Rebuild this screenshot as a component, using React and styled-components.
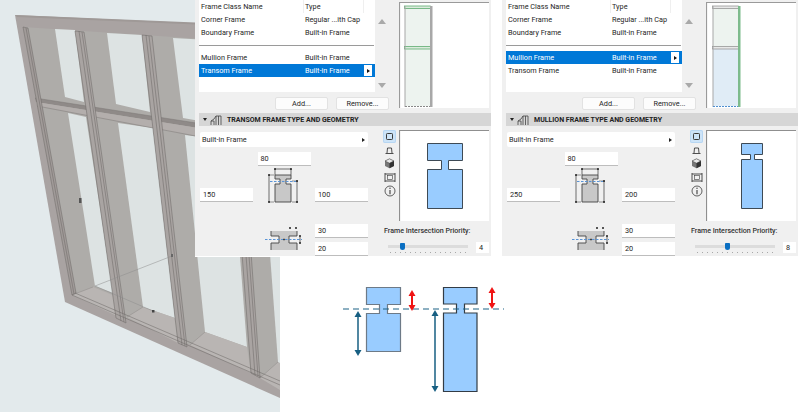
import React from "react";
import styled, { createGlobalStyle } from "styled-components";

const GlobalStyle = createGlobalStyle`
  html, body {
    margin: 0;
    padding: 0;
    background: #fff;
  }
  body {
    font-family: Roboto, "Liberation Sans", sans-serif;
    color: #262626;
  }
`;

const Page = styled.div`
  position: relative;
  width: 799px;
  height: 412px;
  overflow: hidden;
  background: #fff;
`;

const ArtLayer = styled.svg`
  position: absolute;
  left: 0;
  top: 0;
`;

const Panels = styled.div`
  position: relative;
  display: flex;
  gap: 11px;
  padding-left: 195px;
`;

const Panel = styled.section`
  width: 296px;
  flex: none;
  height: 257px;
  padding-left: 4px;
  box-sizing: border-box;
  background: #f0f0f0;
  border-bottom: 1px solid #fff;
`;

const TopArea = styled.div`
  display: flex;
  height: 110px;
`;

const ListBlock = styled.div`
  width: 190px;
  flex: none;
`;

const ListRow = styled.div`
  display: flex;
  height: 92px;
`;

const List = styled.div`
  width: 176px;
  height: 92px;
  background: #fff;
  flex: none;
`;

const Row = styled.div`
  display: grid;
  grid-template-columns: 105px 60px 11px;
  height: 13px;
  line-height: 13px;
  font-size: 7.3px;
  background: ${(p) => (p.$selected ? "#0078d7" : "transparent")};
  color: ${(p) => (p.$selected ? "#fff" : "#262626")};
`;

const Cell = styled.span`
  padding-left: ${(p) => (p.$first ? "2px" : "1px")};
  white-space: nowrap;
  border-right: ${(p) => (p.$head ? "1px solid #efefef" : "none")};
  box-sizing: border-box;
`;

const RowButton = styled.span`
  display: flex;
  align-items: center;
  justify-content: center;
  width: 8px;
  height: 11px;
  margin-top: 1px;
  background: #fff;
  &::before {
    content: "";
    border-left: 3px solid #111;
    border-top: 2px solid transparent;
    border-bottom: 2px solid transparent;
  }
`;

const Divider = styled.div`
  height: 12px;
  display: flex;
  align-items: center;
  &::before {
    content: "";
    width: 175px;
    height: 1px;
    background: #9a9a9a;
  }
`;

const Scroll = styled.div`
  flex: 1;
  display: flex;
  flex-direction: column;
  justify-content: space-between;
  align-items: center;
  padding: 19px 0 4px;
  box-sizing: border-box;
`;

const Arrow = styled.span`
  width: 0;
  height: 0;
  border-left: 4px solid transparent;
  border-right: 4px solid transparent;
  ${(p) =>
    p.$down
      ? "border-top: 5px solid #a9a9a9;"
      : "border-bottom: 5px solid #a9a9a9;"}
`;

const Buttons = styled.div`
  display: flex;
  justify-content: flex-end;
  gap: 8px;
  margin-top: 5px;
`;

const Button = styled.div`
  width: 53px;
  height: 13px;
  line-height: 12px;
  text-align: center;
  font-size: 7.3px;
  background: #fcfcfc;
  border: 1px solid #e2e2e2;
  border-radius: 2px;
  box-sizing: border-box;
`;

const ElevationBox = styled.svg`
  display: block;
  margin: 2px 0 0 10px;
  flex: none;
`;

const SectionHead = styled.header`
  display: flex;
  align-items: center;
  height: 13px;
  margin-top: 3px;
  padding-left: 4px;
  background: #d6d6d6;
  font-size: 7px;
  font-weight: 700;
  color: #222;
  white-space: nowrap;
`;

const Caret = styled.span`
  width: 0;
  height: 0;
  border-left: 2.5px solid transparent;
  border-right: 2.5px solid transparent;
  border-top: 3px solid #222;
  margin-right: 3px;
`;

const HeadIcon = styled.svg`
  margin-right: 5px;
`;

const GeoArea = styled.div`
  display: flex;
  margin-top: 4px;
`;

const Fields = styled.div`
  width: 168px;
  margin: 2px 15px 0 1px;
  flex: none;
`;

const Dropdown = styled.div`
  display: flex;
  align-items: center;
  justify-content: space-between;
  height: 15px;
  padding: 0 3px 0 2px;
  font-size: 7.3px;
  background: #fff;
  border-radius: 2px;
  box-sizing: border-box;
  &::after {
    content: "";
    border-left: 3px solid #222;
    border-top: 2px solid transparent;
    border-bottom: 2px solid transparent;
  }
`;

const SizeGrid = styled.div`
  display: grid;
  grid-template-columns: 53px 53px 53px;
  grid-template-rows: 14px 36px 36px 18px;
  column-gap: 4.5px;
  margin-top: 5px;
`;

const Field = styled.div`
  grid-column: ${(p) => p.$col};
  grid-row: ${(p) => p.$row};
  align-self: end;
  height: 14px;
  line-height: 13px;
  padding-left: 3px;
  font-size: 7.3px;
  background: #fff;
  border-bottom: 1px solid #bdbdbd;
  box-sizing: border-box;
`;

const DimIcon = styled.svg`
  grid-column: 2;
  grid-row: ${(p) => p.$row};
  justify-self: center;
  align-self: ${(p) => p.$align};
  margin-bottom: ${(p) => p.$lift || 0}px;
`;

const RightColumn = styled.div`
  width: 107px;
  flex: none;
`;

const ViewRow = styled.div`
  display: flex;
  height: 91px;
`;

const ViewIcons = styled.div`
  width: 16px;
  flex: none;
  display: flex;
  flex-direction: column;
  align-items: flex-start;
`;

const ViewIcon = styled.div`
  width: 13px;
  height: 13px;
  margin-bottom: 0.6px;
  display: flex;
  align-items: center;
  justify-content: center;
  border-radius: 2px;
  background: ${(p) => (p.$active ? "#cde4f8" : "transparent")};
  box-shadow: ${(p) => (p.$active ? "inset 0 0 0 1px #b7d6f2" : "none")};
`;

const SectionView = styled.svg`
  display: block;
  flex: none;
`;

const PriorityLabel = styled.div`
  margin: 4px 0 0 1px;
  font-size: 7.1px;
  font-weight: 500;
  line-height: 12px;
  white-space: nowrap;
  color: #333;
`;

const SliderRow = styled.div`
  display: flex;
  align-items: flex-start;
  margin-top: 5px;
`;

const Slider = styled.div`
  position: relative;
  width: 80px;
  height: 12px;
  margin: 0 8px 0 5px;
  flex: none;
`;

const Track = styled.div`
  position: absolute;
  left: 0;
  right: 0;
  top: 3px;
  height: 3px;
  background: #dcdcdc;
`;

const Thumb = styled.div`
  position: absolute;
  top: 1px;
  width: 5px;
  height: 7px;
  margin-left: -2px;
  background: #0a6fc2;
  border-radius: 1px 1px 3px 3px;
`;

const Ticks = styled.div`
  position: absolute;
  left: 2px;
  right: 0;
  top: 10px;
  height: 1px;
  background: repeating-linear-gradient(
    to right,
    #a8a8a8 0 1px,
    transparent 1px 5px
  );
`;

const Value = styled.div`
  width: 13px;
  height: 11px;
  line-height: 11px;
  padding-left: 3px;
  font-size: 7.3px;
  background: #fff;
  box-sizing: border-box;
`;

const Diagram = styled.svg`
  display: block;
  margin: 22px 0 0 338px;
`;

const poly = (fill, points, stroke, w) => (
  <polygon points={points} fill={fill} stroke={stroke || "none"} strokeWidth={w || 0} />
);

function WindowArt() {
  const reveal = "#aeaca9";
  const glass = "#dde3e3";
  const sill = "#b9b5b3";
  const frame = "#a9a3a2";
  const face = "#a9a4a2";
  const line = "#6a6665";
  const mullions = [
    "75,31 84,32 126,323 116,318",
    "142,35 152,36 187,347 178,343",
    "226,41 236,42 260,378 251,373",
  ];
  return (
    <ArtLayer width="280" height="412" viewBox="0 0 280 412">
      <rect width="280" height="412" fill="#e3eaec" />
      {poly(frame, "15,15 280,27 280,398 65,302")}
      {poly("#9f9997", "15,15 280,26 280,28 17,17")}
      {poly(reveal, "23,27 280,44 280,383 72,295")}
      {/* glass */}
      {poly(glass, "55,29 75,30 84,102 65,97")}
      {poly(glass, "107,33 142,35 150,112 116,104")}
      {poly(glass, "173,38 226,41 234,127 183,118")}
      {poly(glass, "262,44 280,46 280,130 268,128")}
      {poly(glass, "68,113 86,117 113,293 95,286")}
      {poly(glass, "118,123 153,128 175,318 143,307")}
      {poly(glass, "185,135 231,141 247,347 205,332")}
      {poly(glass, "262,146 280,150 280,365 278,362")}
      {/* sills */}
      {poly(sill, "72,295 93,287 115,296 117,316")}
      {poly(sill, "127,317 143,307 175,318 178,343")}
      {poly(sill, "190,345 205,332 247,347 251,373")}
      {poly(sill, "260,378 278,362 280,363 280,390")}
      <path d="M93,287 L72,295 M143,307 L127,317 M205,332 L190,345 M278,362 L260,378" stroke="#8f8b89" strokeWidth="0.5" />
      {/* transom */}
      {poly("#8f8a88", "35,98 280,136 280,141 36,102")}
      {poly("#b3aeac", "36,102 280,141 280,152 37,106")}
      <path d="M35,98 L280,136 M37,106 L280,152" stroke="#7d7876" strokeWidth="0.5" fill="none" />
      {/* mullions */}
      {mullions.map((points) => (
        <polygon key={points} points={points} fill={face} stroke={line} strokeWidth="0.5" />
      ))}
      <path
        d="M79,31 L121,321 M82,32 L124,322 M146,35 L182,345 M149,36 L185,346 M230,42 L255,375 M233,42 L258,376"
        stroke={line}
        strokeWidth="0.5"
        fill="none"
      />
      {/* frame inner strip */}
      {poly("#a19b99", "23,27 28,28 76,293 72,295", line, 0.5)}
      <path d="M26,28 L74,294 M72,295 L280,385 M75,293 L280,381" stroke={line} strokeWidth="0.5" fill="none" />
      <path d="M95,286 L172,256 M95,286 L153,311" stroke="#8c8c8c" strokeWidth="0.5" fill="none" />
      <rect x="79" y="198" width="2.5" height="5" fill="#555" />
      <rect x="152" y="310" width="2.5" height="2.5" fill="#444" />
      <rect x="171" y="254" width="2" height="3" fill="#666" />
    </ArtLayer>
  );
}

// small elevation thumbnail of the window at the top of each panel
function Elevation({ mode }) {
  const mullion = mode === "mullion";
  const x = mullion ? 7 : 6;
  const gray = "#a8a8a8";
  const green = "#7dbb8c";
  return (
    <ElevationBox width="90" height="106" viewBox="0 0 90 106">
      <rect width="90" height="106" fill="#fff" />
      <path d="M0.5,106 V0.5 H90" stroke="#9a9a9a" strokeWidth="1.2" fill="none" />
      <rect x={x} y="4" width="25" height="42" fill="#edf3ef" />
      <rect x={x} y="47" width="25" height="57" fill={mullion ? "#e0ecf6" : "#edf3ef"} />
      <rect x={x - 0.5} y="4" width="26" height="2.5" fill={mullion ? "#e8e8e8" : "#dcebdd"} stroke={mullion ? "#8b8b8b" : "#4aa35f"} strokeWidth="0.7" />
      <rect x={x - 0.5} y="44.5" width="26" height="2.5" fill={mullion ? "#e8e8e8" : "#dcebdd"} stroke={mullion ? "#8b8b8b" : "#4aa35f"} strokeWidth="0.7" />
      <rect x={x - 0.5} y="4" width="1" height="101" fill={gray} />
      <rect x={x + 25} y="4" width="2.5" height="101" fill={mullion ? green : gray} />
      <line
        x1={x}
        x2={x + 25}
        y1="104.5"
        y2="104.5"
        stroke={mullion ? "#4f8fd0" : "#888"}
        strokeWidth="1"
        strokeDasharray="2 1"
      />
    </ElevationBox>
  );
}

function HeadGlyph() {
  return (
    <HeadIcon width="12" height="12" viewBox="0 0 12 12" fill="none" stroke="#444" strokeWidth="0.8">
      <path d="M1,11 V7 H4 V11 M4,5 L6,2 H11 V11 M6,2 V11 M8.5,2 V11" />
      <path d="M1,7 L4,5" />
    </HeadIcon>
  );
}

function HeadDims() {
  return (
    <DimIcon $row="2" $align="start" width="36" height="38" viewBox="0 0 36 38" fill="none">
      <path d="M9,9 H25 V13 H20 V18 H25 V36 H9 V18 H14 V13 H9 Z" fill="#c8c8c8" stroke="#444" strokeWidth="0.9" />
      <path d="M9,3 H25 M9,3 V9 M25,3 V9" stroke="#333" strokeWidth="0.7" />
      <circle cx="9" cy="3" r="1" fill="#222" />
      <circle cx="25" cy="3" r="1" fill="#222" />
      <path d="M3,9 V36 M31,15 V36" stroke="#333" strokeWidth="0.7" />
      <path d="M3,9 H8 M3,36 H8 M26,15 H32 M26,36 H32" stroke="#333" strokeWidth="0.5" />
      <circle cx="3" cy="9" r="1" fill="#222" />
      <circle cx="3" cy="36" r="1" fill="#222" />
      <circle cx="31" cy="15" r="1" fill="#222" />
      <circle cx="31" cy="36" r="1" fill="#222" />
      <path d="M4,15.5 H30" stroke="#5a94d6" strokeWidth="1" strokeDasharray="2.5 1.5" />
    </DimIcon>
  );
}

function JointDims() {
  return (
    <DimIcon $row="3 / 5" $align="end" $lift={4} width="40" height="27" viewBox="0 0 40 27" fill="none">
      <path d="M7,6 H33 V11 H25 V18 H33 V25 H7 V18 H15 V11 H7 Z" fill="#c8c8c8" />
      <path d="M7,6 V11 H15 V18 H7 V25 M33,6 V11 H25 V18 H33 V25" stroke="#444" strokeWidth="0.9" />
      <path d="M1,14.5 H38" stroke="#5a94d6" strokeWidth="1" strokeDasharray="2.5 1.5" />
      <path d="M19,14.5 H21 M20,13.5 V15.5" stroke="#333" strokeWidth="0.8" />
      <circle cx="26" cy="3" r="1" fill="#222" />
      <circle cx="32" cy="3" r="1" fill="#222" />
      <circle cx="36" cy="11" r="1" fill="#222" />
      <circle cx="36" cy="18" r="1" fill="#222" />
      <path d="M36,11 V18" stroke="#333" strokeWidth="0.7" />
    </DimIcon>
  );
}

function ViewGlyph({ kind }) {
  const stroke = "#3b3b3b";
  if (kind === "square") {
    return (
      <svg width="9" height="9" viewBox="0 0 9 9" fill="none">
        <rect x="1.5" y="1.5" width="6" height="6" rx="0.8" stroke={stroke} />
      </svg>
    );
  }
  if (kind === "plan") {
    return (
      <svg width="11" height="11" viewBox="0 0 11 11" fill="none" stroke={stroke} strokeWidth="0.9">
        <path d="M3,8 L3.5,3 H7.5 L8,8 M1.5,8.5 H9.5" />
      </svg>
    );
  }
  if (kind === "cube") {
    return (
      <svg width="11" height="11" viewBox="0 0 11 11">
        <path d="M5.5,0.8 L10,3 V8 L5.5,10.2 L1,8 V3 Z" fill="#777" />
        <path d="M5.5,0.8 L10,3 L5.5,5.2 L1,3 Z" fill="#e9e9e9" stroke="#333" strokeWidth="0.5" />
        <path d="M5.5,5.2 V10.2 L10,8 V3 Z" fill="#333" />
      </svg>
    );
  }
  if (kind === "frame") {
    return (
      <svg width="12" height="11" viewBox="0 0 12 11" fill="none" stroke={stroke} strokeWidth="0.9">
        <path d="M1,1 V10 M11,1 V10 M1,2 H11 M1,9 H11" />
        <rect x="3.5" y="3.5" width="5" height="4" strokeWidth="0.6" />
      </svg>
    );
  }
  return (
    <svg width="12" height="12" viewBox="0 0 12 12" fill="none" stroke={stroke} strokeWidth="0.8">
      <circle cx="6" cy="6" r="5" />
      <path d="M6,5 V9.2" strokeWidth="1.1" />
      <circle cx="6" cy="3.2" r="0.7" fill={stroke} stroke="none" />
    </svg>
  );
}

// profile outline: x0-x1 outer, nl/nr notch edges, nt/nb notch heights
const profile = (x0, x1, nl, nr, top, nt, nb, bottom) =>
  `M${x0},${top} H${x1} V${nt} H${nr} V${nb} H${x1} V${bottom} H${x0} V${nb} H${nl} V${nt} H${x0} Z`;

function SectionPreview({ mode }) {
  const d =
    mode === "mullion"
      ? profile(35.5, 56.5, 44.5, 48.5, 13.5, 24.5, 29.5, 78.5)
      : profile(28.5, 63.5, 42.5, 49.5, 13.5, 30.5, 39.5, 78.5);
  return (
    <SectionView width="90" height="91" viewBox="0 0 90 91">
      <rect width="90" height="91" fill="#fff" />
      <path d="M0.5,91 V0.5 H90" stroke="#8f8f8f" strokeWidth="1.2" fill="none" />
      <path d={d} fill="#99ccff" stroke="#3e4a55" strokeWidth="1" />
    </SectionView>
  );
}

function Arrowed({ x, y1, y2, color, width }) {
  return (
    <g fill={color} stroke={color}>
      <line x1={x} x2={x} y1={y1 + 3} y2={y2 - 3} strokeWidth={width} />
      <polygon points={`${x},${y1} ${x + 3.5},${y1 + 6} ${x - 3.5},${y1 + 6}`} strokeWidth="0" />
      <polygon points={`${x},${y2} ${x + 3.5},${y2 - 6} ${x - 3.5},${y2 - 6}`} strokeWidth="0" />
    </g>
  );
}

function JointDiagram() {
  // viewBox keeps page coordinates: origin is page x 338, y 279
  return (
    <Diagram width="170" height="118" viewBox="338 279 170 118">
      <path d={profile(366.5, 400.5, 379.5, 387.5, 287.5, 304.5, 313.5, 351.5)} fill="#99ccff" stroke="#6d7a87" strokeWidth="1.2" />
      <path d={profile(443.5, 477, 456.5, 464.5, 287.5, 304, 313, 391.5)} fill="#99ccff" stroke="#333c45" strokeWidth="1.2" />
      <line x1="343" x2="504" y1="309" y2="309" stroke="#1d6385" strokeWidth="1.2" strokeDasharray="6 4" />
      <Arrowed x={412} y1={290} y2={311} color="#f01414" width={2} />
      <Arrowed x={492} y1={287} y2={309} color="#f01414" width={2} />
      <Arrowed x={358} y1={311} y2={356} color="#175f82" width={1.5} />
      <Arrowed x={435} y1={310} y2={392} color="#175f82" width={1.5} />
    </Diagram>
  );
}

const panels = [
  {
    mode: "transom",
    title: "TRANSOM FRAME TYPE AND GEOMETRY",
    selected: "Transom Frame",
    left: "150",
    right: "100",
    thumb: 14,
    priority: "4",
  },
  {
    mode: "mullion",
    title: "MULLION FRAME TYPE AND GEOMETRY",
    selected: "Mullion Frame",
    left: "250",
    right: "200",
    thumb: 32,
    priority: "8",
  },
];

function FrameRow({ name, type, selected }) {
  return (
    <Row $selected={selected}>
      <Cell $first>{name}</Cell>
      <Cell>{type}</Cell>
      {selected && <RowButton />}
    </Row>
  );
}

function FramePanel({ data }) {
  return (
    <Panel>
      <TopArea>
        <ListBlock>
          <ListRow>
            <List>
              <Row>
                <Cell $first $head>Frame Class Name</Cell>
                <Cell $head>Type</Cell>
              </Row>
              <FrameRow name="Corner Frame" type="Regular ...ith Cap" />
              <FrameRow name="Boundary Frame" type="Built-in Frame" />
              <Divider />
              <FrameRow name="Mullion Frame" type="Built-in Frame" selected={data.selected === "Mullion Frame"} />
              <FrameRow name="Transom Frame" type="Built-in Frame" selected={data.selected === "Transom Frame"} />
            </List>
            <Scroll>
              <Arrow />
              <Arrow $down />
            </Scroll>
          </ListRow>
          <Buttons>
            <Button>Add...</Button>
            <Button>Remove...</Button>
          </Buttons>
        </ListBlock>
        <Elevation mode={data.mode} />
      </TopArea>
      <SectionHead>
        <Caret />
        <HeadGlyph />
        {data.title}
      </SectionHead>
      <GeoArea>
        <Fields>
          <Dropdown>Built-in Frame</Dropdown>
          <SizeGrid>
            <Field $col="2" $row="1">80</Field>
            <HeadDims />
            <Field $col="1" $row="2">{data.left}</Field>
            <Field $col="3" $row="2">{data.right}</Field>
            <JointDims />
            <Field $col="3" $row="3">30</Field>
            <Field $col="3" $row="4">20</Field>
          </SizeGrid>
        </Fields>
        <RightColumn>
          <ViewRow>
            <ViewIcons>
              {["square", "plan", "cube", "frame", "info"].map((kind) => (
                <ViewIcon key={kind} $active={kind === "square"}>
                  <ViewGlyph kind={kind} />
                </ViewIcon>
              ))}
            </ViewIcons>
            <SectionPreview mode={data.mode} />
          </ViewRow>
          <PriorityLabel>Frame Intersection Priority:</PriorityLabel>
          <SliderRow>
            <Slider>
              <Track />
              <Thumb style={{ left: data.thumb }} />
              <Ticks />
            </Slider>
            <Value>{data.priority}</Value>
          </SliderRow>
        </RightColumn>
      </GeoArea>
    </Panel>
  );
}

export default function App() {
  return (
    <Page>
      <GlobalStyle />
      <WindowArt />
      <Panels>
        {panels.map((data) => (
          <FramePanel key={data.mode} data={data} />
        ))}
      </Panels>
      <JointDiagram />
    </Page>
  );
}
